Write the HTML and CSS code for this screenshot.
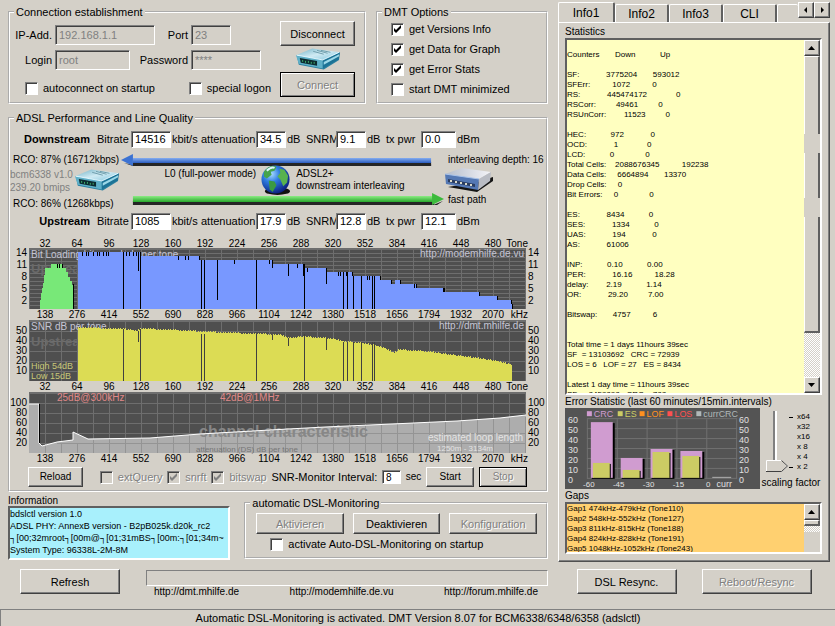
FILE: index.html
```html
<!DOCTYPE html>
<html lang="en">
<head>
  <meta charset="utf-8">
  <title>DMT</title>
  <link rel="stylesheet" href="styles.css">
</head>
<body>
  <svg class="defs" aria-hidden="true">
    <defs>
      <linearGradient id="modem-top" x1="0" y1="0" x2="1" y2="1">
        <stop offset="0" stop-color="#6fb0c4"/>
        <stop offset="0.5" stop-color="#cfeaf3"/>
        <stop offset="1" stop-color="#7fc4dc"/>
      </linearGradient>
      <linearGradient id="blue-bar" x1="0" y1="0" x2="0" y2="1">
        <stop offset="0" stop-color="#86aef0"/>
        <stop offset="1" stop-color="#2a5cc0"/>
      </linearGradient>
      <linearGradient id="green-bar" x1="0" y1="0" x2="0" y2="1">
        <stop offset="0" stop-color="#8cec84"/>
        <stop offset="1" stop-color="#28a82c"/>
      </linearGradient>
      <linearGradient id="router-top" x1="0" y1="0" x2="1" y2="0">
        <stop offset="0" stop-color="#b4bccb"/>
        <stop offset="1" stop-color="#f4f4f8"/>
      </linearGradient>
      <radialGradient id="ocean" cx="0.35" cy="0.3" r="0.75">
        <stop offset="0" stop-color="#a8dcff"/>
        <stop offset="0.4" stop-color="#2f7ce0"/>
        <stop offset="1" stop-color="#0a1c7c"/>
      </radialGradient>
      <symbol id="modem" viewBox="0 0 48 22">
        <path d="M2 8 L4 17 L30 22 L46 12 L46 5 Z" fill="#2a7f9f"/>
        <path d="M1 7 L18 0 L47 4 L29 12 Z" fill="url(#modem-top)"/>
        <path d="M1 7 L29 12 L29 21 L4 16 Z" fill="#5fb0c8"/>
        <path d="M29 12 L47 4 L46 11 L29 21 Z" fill="#1c7396"/>
        <path d="M30 14 L46 6 L46 8 L30 17 Z" fill="#9bd8e8"/>
        <path d="M5 10 L23 13 L23 18 L6 15 Z" fill="#0c2c30"/>
        <path d="M8 12v2M11 13v2M14 13v2M17 14v2M20 14v2" stroke="#3fae6c" stroke-width="1"/>
        <path d="M19 3l11 3M23 2l11 3M27 2l10 2" stroke="#6d9caa" stroke-width="1"/>
        <path d="M2 7l27 5 17-8" stroke="#e4f8ff" fill="none"/>
      </symbol>
    </defs>
  </svg>

  <div class="window">
    <main class="main">
      <div class="left">
        <div class="row-top">
          <fieldset class="connection">
            <legend>Connection establishment</legend>
            <div class="conn-body">
              <div class="conn-form">
                <div class="conn-row">
                  <label class="first" for="ip">IP-Add.</label>
                  <input class="field w-ip" type="text" id="ip" value="192.168.1.1" disabled>
                  <label class="second" for="port">Port</label>
                  <span class="slot"><input class="field w-port" type="text" id="port" value="23" disabled></span>
                </div>
                <div class="conn-row">
                  <label class="first" for="login">Login</label>
                  <input class="field w-login" type="text" id="login" value="root" disabled>
                  <label class="second" for="password">Password</label>
                  <span class="slot"><input class="field w-pass" type="text" id="password" value="****" disabled></span>
                </div>
                <div class="conn-checks">
                  <label class="check"><input type="checkbox">autoconnect on startup</label>
                  <label class="check"><input type="checkbox">special logon</label>
                </div>
              </div>
              <div class="conn-buttons">
                <button class="btn">Disconnect</button>
                <svg class="modem"><use href="#modem"/></svg>
                <button class="btn default" disabled>Connect</button>
              </div>
            </div>
          </fieldset>

          <fieldset class="options">
            <legend>DMT Options</legend>
            <label class="check"><input type="checkbox" checked>get Versions Info</label>
            <label class="check"><input type="checkbox" checked>get Data for Graph</label>
            <label class="check"><input type="checkbox" checked>get Error Stats</label>
            <label class="check"><input type="checkbox">start DMT minimized</label>
          </fieldset>
        </div>

        <fieldset class="adsl">
          <legend>ADSL Performance and Line Quality</legend>

          <div class="line-row">
            <b>Downstream</b>
            <label class="l-rate" for="d-rate">Bitrate</label><input class="val w40" id="d-rate" type="text" value="14516"><span class="u-rate">kbit/s</span>
            <label class="l-att" for="d-att">attenuation</label><input class="val w30" id="d-att" type="text" value="34.5"><span class="u-db">dB</span>
            <label class="l-snr" for="d-snr">SNRM</label><input class="val w30" id="d-snr" type="text" value="9.1"><span class="u-db">dB</span>
            <label class="l-pwr" for="d-pwr">tx pwr</label><input class="val w35" id="d-pwr" type="text" value="0.0"><span>dBm</span>
          </div>

          <div class="link">
            <div class="link-left">
              <span>RCO: 87% (16712kbps)</span>
              <div class="chip">
                <div class="chip-text"><span>bcm6338 v1.0</span><span>239.20 bmips</span></div>
                <svg class="modem"><use href="#modem"/></svg>
              </div>
              <span>RCO: 86% (1268kbps)</span>
            </div>
            <div class="link-mid">
              <svg class="arrow" viewBox="0 0 325 13" preserveAspectRatio="none">
                <path d="M3 9 L13 11 L312 10 L312 12 L12 12 Z" fill="#222"/>
                <rect x="12" y="8" width="300" height="4" fill="#252525"/>
                <rect x="12" y="4" width="300" height="5" fill="url(#blue-bar)"/>
                <path d="M0 6 L12 0 L12 12 Z" fill="#3c72d2"/>
              </svg>
              <div class="mode">
                <span class="power">L0 (full-power mode)</span>
                <svg class="globe" viewBox="0 0 31 31">
                  <ellipse cx="17" cy="27" rx="13" ry="4" fill="#111"/>
                  <circle cx="15" cy="15" r="14.500" fill="url(#ocean)"/>
                  <path d="M3 7 C7 1 13 0 16 2 L14 6 L10 7 L11 10 L6 14 L3 12 Z" fill="#46a44c"/>
                  <path d="M8 16 L14 17 L16 21 L12 28 L9 25 Z" fill="#3b9a42"/>
                  <path d="M19 4 L24 5 L28 11 L27 18 L23 22 L20 15 L17 12 L20 8 Z" fill="#58b24e"/>
                  <path d="M6 6 C9 3 12 2 14 3" stroke="#dff6ff" stroke-width="2" fill="none"/>
                </svg>
                <span class="proto">ADSL2+<br>downstream interleaving</span>
              </div>
              <svg class="arrow" viewBox="0 0 325 13" preserveAspectRatio="none">
                <rect x="12" y="8" width="303" height="4" fill="#252525"/>
                <path d="M314 12 L324 8 L318 12 Z" fill="#222"/>
                <rect x="12" y="3" width="302" height="6" fill="url(#green-bar)"/>
                <path d="M325 6 L313 0 L313 12 Z" fill="#3cba3c"/>
              </svg>
            </div>
            <div class="link-right">
              <span>interleaving depth: 16</span>
              <svg class="router" viewBox="0 0 49 24">
                <path d="M4 19 L33 24 L49 13 L49 9 L33 14 Z" fill="#151515"/>
                <path d="M1 6 L18 0 L47 4 L35 11 Z" fill="url(#router-top)"/>
                <path d="M1 6 L35 11 L34 22 L2 16 Z" fill="#5478b4"/>
                <path d="M35 11 L47 4 L46 13 L34 22 Z" fill="#b9bcc4"/>
                <path d="M1 6 L35 11" stroke="#a9c3ea"/>
                <path d="M4 11 L31 16 L31 19 L4 14 Z" fill="#2b3d60"/>
                <g fill="#d8d8c8"><rect x="6" y="12" width="2" height="2"/><rect x="11" y="13" width="2" height="2"/><rect x="16" y="14" width="2" height="2"/><rect x="21" y="15" width="2" height="2"/><rect x="26" y="16" width="2" height="2"/></g>
              </svg>
              <span>fast path</span>
            </div>
          </div>

          <div class="line-row">
            <b>Upstream</b>
            <label class="l-rate" for="u-rate">Bitrate</label><input class="val w40" id="u-rate" type="text" value="1085"><span class="u-rate">kbit/s</span>
            <label class="l-att" for="u-att">attenuation</label><input class="val w30" id="u-att" type="text" value="17.9"><span class="u-db">dB</span>
            <label class="l-snr" for="u-snr">SNRM</label><input class="val w30" id="u-snr" type="text" value="12.8"><span class="u-db">dB</span>
            <label class="l-pwr" for="u-pwr">tx pwr</label><input class="val w35" id="u-pwr" type="text" value="12.1"><span>dBm</span>
          </div>

          <svg class="graphs" id="graphs" viewBox="10 238 536 227"></svg>

          <div class="controls">
            <button class="btn small reload">Reload</button>
            <label class="check off"><input type="checkbox" disabled>extQuery</label>
            <label class="check off"><input type="checkbox" checked disabled>snrft</label>
            <label class="check off"><input type="checkbox" checked disabled>bitswap</label>
            <label class="interval" for="interval">SNR-Monitor Interval:</label>
            <input class="val w20" type="text" id="interval" value="8">
            <span class="sec">sec</span>
            <button class="btn small">Start</button>
            <button class="btn small default" disabled>Stop</button>
          </div>
        </fieldset>

        <div class="row-info">
          <div class="info">
            <label for="information">Information</label>
            <textarea id="information" readonly>bdslctl version 1.0
ADSL PHY: AnnexB version - B2pB025k.d20k_rc2
&#x2510;[00;32mroot&#x2510;[00m@&#x2510;[01;31mBS&#x2510;[00m:&#x2510;[01;34m~
System Type: 96338L-2M-8M</textarea>
          </div>
          <fieldset class="monitoring">
            <legend>automatic DSL-Monitoring</legend>
            <div class="mon-buttons">
              <button class="btn" disabled>Aktivieren</button>
              <button class="btn">Deaktivieren</button>
              <button class="btn" disabled>Konfiguration</button>
            </div>
            <label class="check"><input type="checkbox">activate Auto-DSL-Monitoring on startup</label>
          </fieldset>
        </div>
      </div>

      <div class="right">
        <nav class="tabs">
          <button class="tab active">Info1</button>
          <button class="tab">Info2</button>
          <button class="tab">Info3</button>
          <button class="tab">CLI</button>
          <button class="tab rest" aria-label="more"></button>
          <button class="btn spin" aria-label="previous tab"><svg viewBox="0 0 8 8"><path d="M5 1v6L2 4z"/></svg></button>
          <button class="btn spin" aria-label="next tab"><svg viewBox="0 0 8 8"><path d="M3 1v6l3-3z"/></svg></button>
        </nav>
        <div class="panel">
          <label class="cap" for="stats">Statistics</label>
          <div class="list stats">
            <textarea id="stats" readonly>

Counters       Down           Up

SF:            3775204       593012
SFErr:          1072          0
RS:            445474172             0
RSCorr:         49461         0
RSUnCorr:        11523         0

HEC:           972            0
OCD:            1             0
LCD:           0              0
Total Cells:    2088676345          192238
Data Cells:     6664894       13370
Drop Cells:     0
Bit Errors:     0              0

ES:            8434           0
SES:            1334           0
UAS:            194            0
AS:            61006

INP:           0.10           0.00
PER:            16.16          18.28
delay:        2.19           1.14
OR:            29.20         7.00

Bitswap:       4757          6


Total time = 1 days 11hours 39sec
SF  = 13103692   CRC = 72939
LOS = 6   LOF = 27   ES = 8434

Latest 1 day time = 11hours 39sec
SF  = 8459898   CRC = 788</textarea>
            <div class="scroll">
              <button class="btn sb" aria-label="up"><svg viewBox="0 0 8 8"><path d="M0 6h7L3.500 2z"/></svg></button>
              <div class="thumb t1"></div>
              <div class="thumb t2"></div>
              <div class="thumb t3"></div>
              <div class="trough"></div>
              <button class="btn sb" aria-label="down"><svg viewBox="0 0 8 8"><path d="M0 2h7L3.500 6z"/></svg></button>
            </div>
          </div>

          <span class="cap">Error Statistic (last 60 minutes/15min.intervals)</span>
          <div class="errors">
            <svg class="err-chart" id="errors" viewBox="566 407 196 81"></svg>
            <div class="scaling">
              <div class="scale-top">
                <input type="range" id="scale" min="0" max="5" value="0">
                <ul>
                  <li class="tick">x64</li>
                  <li>x32</li>
                  <li>x16</li>
                  <li>x 8</li>
                  <li>x 4</li>
                  <li class="tick">x 2</li>
                </ul>
              </div>
              <label for="scale">scaling factor</label>
            </div>
          </div>

          <label class="cap" for="gaps">Gaps</label>
          <div class="list gaps">
            <textarea id="gaps" readonly>Gap1 474kHz-479kHz (Tone110)
Gap2 548kHz-552kHz (Tone127)
Gap3 811kHz-815kHz (Tone188)
Gap4 824kHz-828kHz (Tone191)
Gap5 1048kHz-1052kHz (Tone243)</textarea>
            <div class="scroll">
              <button class="btn sb" aria-label="up"><svg viewBox="0 0 8 8"><path d="M0 6h7L3.500 2z"/></svg></button>
              <div class="thumb g1"></div>
              <div class="trough g2"></div>
            </div>
          </div>
        </div>
      </div>
    </main>

    <div class="bottom">
      <div class="bottom-left">
        <button class="btn big">Refresh</button>
        <div class="progress-box">
          <div class="progress"></div>
          <div class="links">
            <a href="http://dmt.mhilfe.de">http://dmt.mhilfe.de</a>
            <a href="http://modemhilfe.de.vu">http://modemhilfe.de.vu</a>
            <a href="http://forum.mhilfe.de">http://forum.mhilfe.de</a>
          </div>
        </div>
      </div>
      <div class="bottom-right">
        <button class="btn big">DSL Resync.</button>
        <button class="btn big wide" disabled>Reboot/Resync</button>
      </div>
    </div>

    <footer class="status">Automatic DSL-Monitoring is activated. DMT Version 8.07 for BCM6338/6348/6358 (adslctl)</footer>
  </div>

  <script src="script.js"></script>
</body>
</html>
```
FILE: styles.css
```css
* {
  box-sizing: border-box;
}

body {
  margin: 0;
  background: #d4d0c8;
  color: #000;
  font: 11px/14px "Liberation Sans", Arial, sans-serif;
}

.defs {
  position: absolute;
  width: 0;
  height: 0;
}

.window {
  display: flex;
  flex-direction: column;
  min-height: 100vh;
}

.main {
  display: grid;
  grid-template-columns: minmax(0, 540fr) minmax(0, 272fr);
  gap: 10px;
  padding: 0 5px 0 8px;
}

.left {
  display: flex;
  flex-direction: column;
  padding-top: 5px;
}

svg {
  display: block;
}

/* basic controls */
fieldset {
  margin: 0;
  padding: 0;
  border: 2px groove #fff;
  min-width: 0;
}

legend {
  margin-left: 4px;
  padding: 0 2px;
  line-height: 14px;
}

button,
input,
textarea {
  margin: 0;
  padding: 0;
  font: inherit;
  color: inherit;
  border-radius: 0;
}

.btn {
  height: 25px;
  background: #d4d0c8;
  border: 1px solid;
  border-color: #fff #404040 #404040 #fff;
  box-shadow: inset -1px -1px #808080;
}

.btn:disabled {
  color: #808080;
  text-shadow: 1px 1px #fff;
}

.btn.default {
  border-color: #000;
  box-shadow: inset 1px 1px #fff, inset -1px -1px #808080;
}

.btn.small {
  width: 48px;
  height: 20px;
  font-size: 10px;
}

.btn.reload {
  width: 55px;
}

.field,
.val {
  height: 20px;
  min-width: 0;
  padding: 0 3px;
  border: 1px solid;
  border-color: #808080 #fff #fff #808080;
  box-shadow: inset 1px 1px #404040;
}

.field {
  width: 100px;
  background: #d4d0c8;
  color: #808080;
}

.field.w-port {
  width: 40px;
}

.field.w-login {
  width: 75px;
}

.field.w-pass {
  width: 70px;
}

.val {
  height: 17px;
  background: #fff;
}

.w40 {
  width: 40px;
}

.w30 {
  width: 30px;
}

.w35 {
  width: 35px;
}

.w20 {
  width: 19px;
}

.check {
  display: flex;
  align-items: center;
  gap: 5px;
  height: 14px;
  white-space: nowrap;
}

.check input {
  appearance: none;
  flex: none;
  width: 13px;
  height: 13px;
  background: #fff;
  border: 1px solid;
  border-color: #808080 #fff #fff #808080;
  box-shadow: inset 1px 1px #404040;
}

.check input:checked {
  background: #fff url("data:image/svg+xml,%3Csvg xmlns='http://www.w3.org/2000/svg' width='11' height='11'%3E%3Cpath d='M2 4v3l2 2 5-5v-3l-5 5z'/%3E%3C/svg%3E");
}

.check.off {
  color: #808080;
  text-shadow: 1px 1px #fff;
}

.check.off input {
  background: #d4d0c8;
}

.check.off input:checked {
  background: #d4d0c8 url("data:image/svg+xml,%3Csvg xmlns='http://www.w3.org/2000/svg' width='11' height='11'%3E%3Cpath fill='gray' d='M2 4v3l2 2 5-5v-3l-5 5z'/%3E%3C/svg%3E");
}

/* connection and options */
.row-top {
  display: grid;
  grid-template-columns: minmax(0, 358fr) minmax(0, 172fr);
  gap: 10px;
  height: 99px;
}

.conn-body {
  display: flex;
  justify-content: space-between;
  padding: 0 9px 0 5px;
}

.conn-form {
  display: flex;
  flex-direction: column;
  gap: 5px;
  width: 246px;
  padding-top: 6px;
}

.conn-row {
  display: flex;
  align-items: center;
  gap: 3px;
}

.conn-row .first {
  width: 37px;
  text-align: right;
  white-space: nowrap;
}

.conn-row .second {
  margin-left: auto;
}

.slot {
  width: 70px;
}

.slot .field {
  display: block;
}

.conn-checks {
  display: flex;
  justify-content: space-between;
  width: 256px;
  padding: 6px 0 0 10px;
}

.conn-buttons {
  display: flex;
  flex-direction: column;
  align-items: stretch;
  gap: 2px;
  width: 75px;
  padding-top: 2px;
}

.modem {
  width: 46px;
  height: 22px;
}

.conn-buttons .modem {
  align-self: center;
}

.options .check {
  margin-left: 13px;
  height: 20px;
}

/* line quality */
.adsl {
  margin-top: 7px;
}

.line-row {
  display: flex;
  align-items: center;
  height: 18px;
  white-space: nowrap;
}

.line-row b {
  width: 80px;
  text-align: right;
}

.line-row span {
  padding-left: 1px;
}

.adsl legend + .line-row {
  margin-top: 5px;
}

.l-rate {
  width: 41px;
  padding-left: 7px;
}

.u-rate {
  width: 30px;
}

.l-att {
  width: 55px;
}

.u-db {
  width: 20px;
}

.l-snr {
  width: 30px;
}

.l-pwr {
  width: 35px;
}

.link {
  display: flex;
  height: 64px;
  padding-top: 6px;
  font-size: 10px;
  line-height: 12px;
  white-space: nowrap;
}

.link-left {
  width: 111px;
}

.link-left > span {
  display: block;
  padding-left: 3px;
}

.chip {
  display: flex;
  gap: 2px;
  height: 32px;
  padding-top: 3px;
}

.chip-text {
  display: flex;
  flex-direction: column;
  gap: 1px;
  width: 62px;
  color: #808080;
}

.link-mid {
  flex: 1;
  display: flex;
  flex-direction: column;
}

.arrow {
  width: 100%;
  height: 13px;
}

.mode {
  display: flex;
  justify-content: center;
  gap: 5px;
  height: 26px;
  padding-left: 4px;
}

.mode .proto,
.mode .power {
  padding-top: 1px;
}

.globe {
  width: 30px;
  height: 30px;
  flex-shrink: 0;
  margin-top: -2px;
}

.link-right {
  width: 102px;
  display: flex;
  flex-direction: column;
}

.link-right span {
  padding-left: 4px;
}

.link-right .router {
  width: 49px;
  height: 24px;
  margin: 2px 0;
}

.graphs {
  width: 100%;
  margin-top: 8px;
  font-size: 10px;
}

.graphs .note {
  fill: #c4c4d4;
}

.controls {
  display: flex;
  align-items: center;
  justify-content: space-between;
  padding: 2px 19px 3px 18px;
  white-space: nowrap;
}

.controls .reload {
  margin-right: 12px;
}

.controls .w20 {
  height: 14px;
  font-size: 10px;
  line-height: 12px;
}

.controls .sec {
  font-size: 10px;
}

/* information */
.row-info {
  display: flex;
  gap: 14px;
  padding-top: 3px;
}

.info {
  flex: 224;
  min-width: 0;
  display: flex;
  flex-direction: column;
  font-size: 10px;
  line-height: 11px;
}

.info textarea {
  height: 54px;
  background: #a8f0fc;
  border: 2px solid;
  border-color: #606060 #fff #fff #606060;
  font-size: 9px;
  line-height: 12px;
  resize: none;
  overflow: hidden;
  white-space: pre;
}

.monitoring {
  flex: 302;
  height: 63px;
  margin-top: 1px;
}

.mon-buttons {
  display: flex;
  gap: 9px;
  padding: 3px 9px 3px 10px;
}

.mon-buttons .btn {
  flex: 1;
  height: 21px;
}

.monitoring .check {
  padding-left: 24px;
}

/* tabs */
.right {
  display: flex;
  flex-direction: column;
  padding-top: 2px;
}

.tabs {
  display: flex;
  align-items: flex-end;
  height: 20px;
}

.tab {
  width: 54px;
  height: 18px;
  background: #d4d0c8;
  border: solid;
  border-width: 1px 2px 0 1px;
  border-color: #fff #606060 #fff #fff;
  border-radius: 2px 2px 0 0;
  font-size: 12px;
}

.tab.active {
  width: 57px;
  height: 20px;
}

.tab.rest {
  flex: 1;
  border-right: 0;
}

.spin {
  width: 16px;
  height: 16px;
  align-self: flex-start;
  display: grid;
  place-items: center;
}

.spin svg,
.sb svg {
  width: 8px;
  height: 8px;
}

.panel {
  display: flex;
  flex-direction: column;
  padding: 2px 7px 7px 6px;
  border: 1px solid;
  border-color: #fff #505050 #505050 #fff;
  box-shadow: inset -1px -1px #808080;
}

.cap {
  font-size: 10px;
  line-height: 13px;
  white-space: nowrap;
}

.list {
  display: flex;
  border: 2px solid;
  border-color: #606060 #fff #fff #606060;
}

.list textarea {
  flex: 1;
  min-width: 0;
  border: 0;
  background: #ffffc0;
  font-size: 8px;
  line-height: 10px;
  white-space: pre;
  resize: none;
  overflow: hidden;
}

.stats {
  height: 357px;
}

.gaps {
  height: 52px;
}

.list.gaps textarea {
  background: #ffd070;
}

.scroll {
  display: flex;
  flex-direction: column;
  width: 16px;
}

.sb {
  flex: none;
  width: 16px;
  height: 16px;
  display: grid;
  place-items: center;
}

.thumb {
  border: solid;
  border-width: 0 2px 0 1px;
  border-color: #fff #606060 #606060 #fff;
}

.t1 {
  height: 78px;
  border-top-width: 1px;
}

.t2 {
  height: 45px;
  margin: 19px 0;
}

.t3 {
  height: 116px;
  border-bottom-width: 2px;
}

.trough {
  flex: 1;
  background: repeating-conic-gradient(#fff 0 25%, #d4d0c8 0 50%) 0 0 / 2px 2px;
}

.g1 {
  height: 6px;
  border-width: 1px 2px 2px 1px;
}

.g2 {
  flex: none;
  height: 6px;
}

/* error statistic */
.errors {
  display: flex;
  height: 81px;
}

.err-chart {
  flex: 196;
  min-width: 0;
  height: 81px;
  background: #545454;
  font-size: 9px;
}

.scaling {
  flex: 62;
  min-width: 62px;
  font-size: 10px;
  line-height: 12px;
  text-align: center;
  white-space: nowrap;
}

.scale-top {
  display: flex;
  height: 69px;
  padding: 3px 0 0 6px;
}

.scaling input {
  appearance: none;
  writing-mode: vertical-lr;
  direction: rtl;
  width: 22px;
  height: 61px;
  background: linear-gradient(#808080, #808080) 7px 0 / 2px 100% no-repeat, linear-gradient(#fff, #fff) 9px 0 / 2px 100% no-repeat;
}

.scaling input::-webkit-slider-thumb {
  appearance: none;
  width: 22px;
  height: 12px;
  background: url("data:image/svg+xml,%3Csvg xmlns='http://www.w3.org/2000/svg' width='22' height='12'%3E%3Cpath fill='%23d4d0c8' stroke='white' d='M.5 11.500v-11h15l6 5.500-6 5.500z'/%3E%3Cpath fill='none' stroke='%23404040' d='M0 11.500h15.500l6-5.500-6-5.500'/%3E%3C/svg%3E");
}

.scaling ul {
  margin: 0;
  padding: 1px 0 0 9px;
  list-style: none;
  font-size: 8px;
  line-height: 10px;
  text-align: left;
}

.scaling .tick {
  position: relative;
}

.scaling .tick::before {
  content: "";
  position: absolute;
  left: -8px;
  top: 5px;
  width: 4px;
  height: 1px;
  background: #000;
}

/* bottom */
.bottom {
  display: grid;
  grid-template-columns: minmax(0, 540fr) minmax(0, 272fr);
  gap: 10px;
  padding: 7px 5px 0 8px;
}

.bottom-left {
  display: flex;
  gap: 26px;
  padding-left: 12px;
}

.btn.big {
  flex: none;
  width: 100px;
}

.btn.wide {
  width: 110px;
}

.progress-box {
  flex: 1;
}

.progress {
  height: 16px;
  margin-top: 1px;
  border: 1px solid;
  border-color: #808080 #fff #fff #808080;
}

.links {
  display: flex;
  justify-content: space-between;
  padding: 0 10px 0 8px;
  font-size: 10px;
  line-height: 12px;
}

.links a {
  color: #000;
  text-decoration: none;
}

.bottom-right {
  display: flex;
  justify-content: center;
  gap: 25px;
}

.status {
  margin-top: auto;
  height: 17px;
  border-top: 1px solid #808080;
  border-left: 1px solid #808080;
  text-align: center;
  line-height: 17px;
}
```
FILE: script.js
```javascript
const NS = "http://www.w3.org/2000/svg";

function add(parent, tag, attrs, text) {
  const el = document.createElementNS(NS, tag);
  for (const key in attrs) {
    el.setAttribute(key, attrs[key]);
  }
  if (text !== undefined) {
    el.textContent = text;
  }
  parent.appendChild(el);
  return el;
}

function rect(parent, x, y, w, h, fill) {
  add(parent, "rect", { x: x, y: y, width: w, height: h, fill: fill });
}

function label(parent, x, y, text, attrs) {
  add(parent, "text", Object.assign({ x: x, y: y }, attrs), text);
}

const graphs = document.getElementById("graphs");
const LEFT = 29;
const RIGHT = 526;

function plot(top, bottom, gridY) {
  rect(graphs, LEFT, top, RIGHT - LEFT, bottom - top, "#4f4f4f");
  grid(top, bottom, gridY, "#6e6e6e");
}

function grid(top, bottom, gridY, color) {
  for (let x = LEFT; x < RIGHT; x += 16) {
    rect(graphs, x, top, 1, bottom - top, color);
  }
  for (let y = bottom - gridY; y > top; y -= gridY) {
    rect(graphs, LEFT, y, RIGHT - LEFT, 1, color);
  }
  rect(graphs, LEFT, top, RIGHT - LEFT, 1, color);
}

// tone numbers or frequencies, one every 32 tones
function axisX(y, step, unit) {
  for (let i = 1; i <= 15; i++) {
    label(graphs, 13 + i * 32, y, i * step, { "text-anchor": "middle" });
  }
  label(graphs, 528, y, unit, { "text-anchor": "end" });
}

function axisY(values, y0, scale) {
  for (const v of values) {
    const y = y0 - v * scale + 4;
    label(graphs, 27, y, v, { "text-anchor": "end" });
    label(graphs, 528, y, v);
  }
}

// bit loading
const bits = [[78, 14], [140, 13], [199, 12], [272, 11], [304, 10], [326, 9], [352, 8], [380, 7], [391, 6], [395, 7],
  [400, 6], [416, 5], [444, 4], [479, 3], [497, 2], [511, 1], [512, 0]];
const gaps = [123, 140, 201, 204, 256, 304, 343, 347, 353, 361, 372, 374];
const nicks = [[82, 4], [86, 4], [88, 4], [93, 4], [97, 4], [99, 4], [103, 4], [106, 4], [108, 4], [126, 4], [129, 4],
  [133, 4], [136, 4], [138, 19], [178, 4], [185, 4], [188, 4], [217, 40], [234, 4], [269, 4], [272, 4], [288, 12],
  [297, 4], [303, 12], [307, 4], [326, 12], [338, 4], [340, 4], [346, 4], [367, 4], [369, 4], [414, 4], [443, 4]];

function bitTop(x) {
  let value = 0;
  for (const [start, b] of bits) {
    if (x >= start) {
      value = b;
    }
  }
  return 308 - value * 4;
}

axisX(247, 32, "Tone");
plot(248, 309, 4);
label(graphs, 31, 273, "Upstream", { fill: "#6a6a6a", "font-size": 13, "font-weight": "bold" });
label(graphs, 31, 258, "Bit Loading  bits symbols per tone", { class: "note" });
label(graphs, 524, 257, "http://modemhilfe.de.vu", { class: "note", "text-anchor": "end" });
add(graphs, "path", {
  d: "M40 309V300H41V293H42V288H43V283H44V275H45V268H51V264H63V268H66V272H68V277H70V281H72V285H73V309Z",
  fill: "#78e878"
});
rect(graphs, 73, 284, 1, 25, "#000");
for (const x of [57, 59, 62]) {
  rect(graphs, x, 264, 1, 4, "#000");
}
for (let i = 0; i < bits.length - 1; i++) {
  const x = bits[i][0];
  rect(graphs, x, 308 - bits[i][1] * 4, bits[i + 1][0] - x, bits[i][1] * 4 + 1, "#7898ff");
  rect(graphs, bits[i + 1][0], 308 - bits[i][1] * 4, 1, 4, "#000");
}
for (const [x, h] of nicks) {
  rect(graphs, x, bitTop(x), 1, h, "#000");
}
for (const x of gaps) {
  rect(graphs, x, bitTop(x), 1, 309 - bitTop(x), "#000");
}
rect(graphs, 512, 304, 1, 5, "#000");
axisY([14, 11, 8, 5, 2], 308, 4);
axisX(318, 138, "kHz");

// signal to noise ratio
const snr = [[78, 328], [122, 329], [136, 331], [141, 329], [169, 330], [205, 332], [226, 333], [280, 335], [288, 338],
  [304, 337], [333, 339], [345, 342], [360, 343], [372, 345], [384, 348], [394, 353], [398, 350], [415, 351],
  [430, 352], [450, 355], [475, 358], [495, 361], [512, 365]];

plot(320, 381, 10);
label(graphs, 31, 346, "Upstream", { fill: "#6a6a6a", "font-size": 13, "font-weight": "bold" });
label(graphs, 31, 330, "SNR  dB per tone", { class: "note" });
label(graphs, 524, 329, "http://dmt.mhilfe.de", { class: "note", "text-anchor": "end" });
label(graphs, 31, 369, "High 54dB", { fill: "#c8c878", "font-size": 9 });
label(graphs, 31, 379, "Low  15dB", { fill: "#c8c878", "font-size": 9 });
let shape = "M78 381";
for (let i = 0; i < snr.length - 1; i++) {
  const [x0, y0] = snr[i];
  const [x1, y1] = snr[i + 1];
  for (let x = x0; x < x1; x++) {
    const noise = (x * 7 + x * x) % 5 === 0 ? 1 : 0;
    shape += "V" + (Math.round(y0 + (y1 - y0) * (x - x0) / (x1 - x0)) - noise) + "H" + (x + 1);
  }
}
add(graphs, "path", { d: shape + "V381Z", fill: "#dcdc54" });
for (const x of gaps) {
  const top = x < 150 ? 329 : x < 340 ? 334 : 342;
  rect(graphs, x, top, 1, 381 - top, "#404040");
}
rect(graphs, 138, 331, 1, 11, "#404040");
rect(graphs, 272, 335, 1, 5, "#404040");
rect(graphs, 288, 338, 1, 8, "#404040");
rect(graphs, 326, 339, 1, 11, "#404040");
axisY([50, 40, 30, 20, 10], 380, 1);
axisX(390, 32, "Tone");

// channel characteristic
plot(392, 453, 10);
const curve = "39 404 V443 L42 446 L57 442 L73 440 V432 L88 439 L150 438 L200 434 L270 430 L325 427 L392 424 L457 421 L500 418 L526 415";
add(graphs, "path", { d: "M29 404 L" + curve + " V453 H29 Z", fill: "#adadad" });
for (let x = 45; x < RIGHT; x += 16) {
  const top = x < 78 ? 444 : 441 - Math.round((x - 78) * 24 / 448);
  rect(graphs, x, top, 1, 453 - top, "#949494");
}
rect(graphs, 57, 443, RIGHT - 57, 1, "#949494");
rect(graphs, 230, 433, RIGHT - 230, 1, "#949494");
label(graphs, 199, 437, "channel characteristic", { fill: "#878787", "font-size": 16, "font-weight": "bold" });
add(graphs, "path", { d: "M29 404 L" + curve, fill: "none", stroke: "#fff" });
rect(graphs, 39, 404, 1, 39, "#000");
label(graphs, 57, 401, "25dB@300kHz", { fill: "#e08888" });
label(graphs, 220, 401, "42dB@1MHz", { fill: "#e08888" });
label(graphs, 196, 452, "attenuation (DS)  dB per tone", { fill: "#757575", "font-size": 8 });
label(graphs, 523, 441, "estimated loop length", { fill: "#e4e4e4", "text-anchor": "end" });
label(graphs, 437, 451, "1250m - 3134m", { fill: "#e4e4e4", "font-size": 8 });
axisY([100, 80, 60, 40, 20], 452, 0.5);
axisX(462, 138, "kHz");

// error statistic
const errors = document.getElementById("errors");
for (let i = 0; i < 6; i++) {
  rect(errors, 588 + i * 30, 418, 1, 60, "#707070");
}
for (let i = 0; i < 7; i++) {
  rect(errors, 588, 417 + i * 10, 151, 1, "#707070");
  label(errors, 569, 422 + i * 10, 60 - i * 10, { fill: "#e0e0e0" });
  label(errors, 741, 422 + i * 10, 60 - i * 10, { fill: "#e0e0e0" });
}
const bars = [[592, 421, 462], [622, 457, 469], [652, 448, 451], [682, 450, 455]];
for (const [x, crc, es] of bars) {
  rect(errors, x + 1, crc + 1, 23, 477 - crc, "#000");
  rect(errors, x, crc, 22, 477 - crc, "#d09cd0");
  rect(errors, x + 3, es + 1, 17, 476 - es, "#000");
  rect(errors, x + 2, es, 17, 477 - es, "#cccc64");
}
rect(errors, 714, 476, 19, 1, "#b0b0b0");
const legend = [[588, "CRC", "#d09cd0"], [619, "ES", "#cccc64"], [641, "LOF", "#ff9020"], [669, "LOS", "#ff5050"], [698, "currCRC", "#b0b8b8"]];
for (const [x, name, color] of legend) {
  rect(errors, x, 410, 5, 5, color);
  label(errors, x + 7, 416, name, { fill: color });
}
["-60", "-45", "-30", "-15", "0"].forEach(function (t, i) {
  label(errors, 590 + i * 30, 486, t, { fill: "#e0e0e0", "text-anchor": "middle", "font-size": 8 });
});
label(errors, 726, 486, "curr", { fill: "#e0e0e0", "text-anchor": "middle" });
```
